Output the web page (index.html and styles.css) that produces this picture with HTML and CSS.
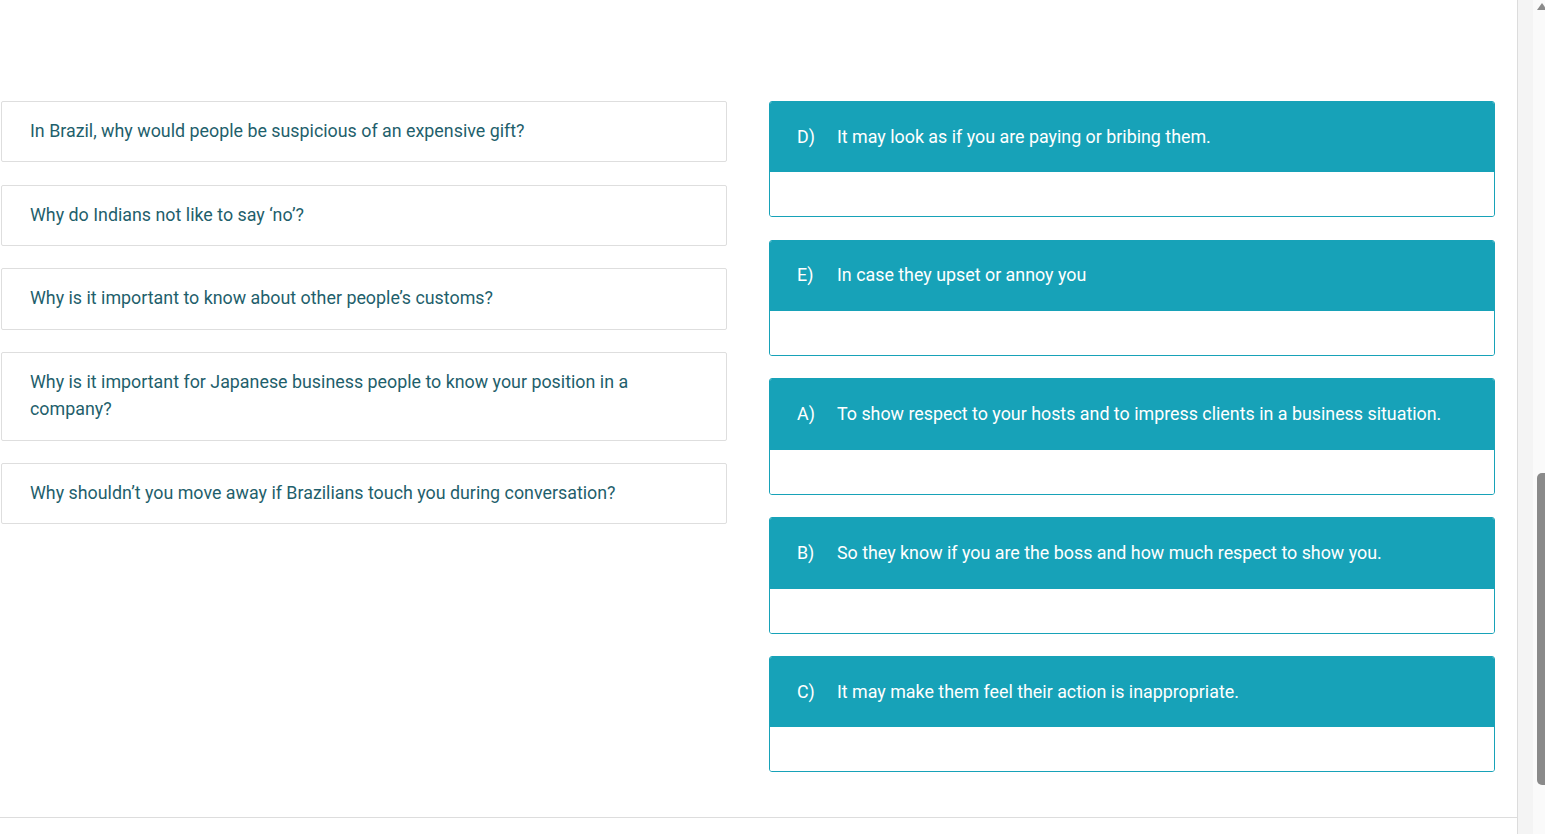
FILE: index.html
```html
<!DOCTYPE html>
<html lang="en">
<head>
<meta charset="utf-8">
<title>Matching</title>
<link rel="stylesheet" href="styles.css">
</head>
<body>
<div class="frame">
  <div class="page">
    <div class="content">
      <div class="questions">
        <div class="q-card">In Brazil, why would people be suspicious of an expensive gift?</div>
        <div class="q-card">Why do Indians not like to say ‘no’?</div>
        <div class="q-card">Why is it important to know about other people’s customs?</div>
        <div class="q-card">Why is it important for Japanese business people to know your position in a company?</div>
        <div class="q-card">Why shouldn’t you move away if Brazilians touch you during conversation?</div>
      </div>
      <div class="answers">
        <div class="a-card">
          <div class="a-head"><span class="a-letter">D)</span><span class="a-text">It may look as if you are paying or bribing them.</span></div>
          <div class="a-drop"></div>
        </div>
        <div class="a-card">
          <div class="a-head"><span class="a-letter">E)</span><span class="a-text">In case they upset or annoy you</span></div>
          <div class="a-drop"></div>
        </div>
        <div class="a-card">
          <div class="a-head"><span class="a-letter">A)</span><span class="a-text">To show respect to your hosts and to impress clients in a business situation.</span></div>
          <div class="a-drop"></div>
        </div>
        <div class="a-card">
          <div class="a-head"><span class="a-letter">B)</span><span class="a-text">So they know if you are the boss and how much respect to show you.</span></div>
          <div class="a-drop"></div>
        </div>
        <div class="a-card">
          <div class="a-head"><span class="a-letter">C)</span><span class="a-text">It may make them feel their action is inappropriate.</span></div>
          <div class="a-drop"></div>
        </div>
      </div>
    </div>
    <div class="footer-line"></div>
  </div>
  <div class="side">
    <div class="side-pad"></div>
    <div class="scrollbar">
      <div class="arrow-up"></div>
      <div class="thumb"></div>
    </div>
  </div>
</div>
</body>
</html>
```

FILE: styles.css
```css
html, body {
  margin: 0;
  padding: 0;
  height: 100%;
  background: #ffffff;
  overflow: hidden;
}

body {
  font-family: Roboto, "Liberation Sans", Arial, sans-serif;
}

.frame {
  display: flex;
  height: 834px;
  width: 1545px;
}

.page {
  width: 1517px;
  border-right: 1px solid #dcdcdc;
  display: flex;
  flex-direction: column;
}

.content {
  display: grid;
  grid-template-columns: 726px 726px;
  column-gap: 42px;
  align-items: start;
  padding: 101px 0 0 1px;
  height: 817px;
  box-sizing: border-box;
}

.questions {
  display: flex;
  flex-direction: column;
  gap: 22.33px;
}

.q-card {
  border: 1px solid #dedede;
  border-radius: 2px;
  padding: 15px 28px 17px 28px;
  font-size: 17.85px;
  line-height: 27.33px;
  color: #1f5f6c;
}

.answers {
  display: flex;
  flex-direction: column;
  gap: 22.33px;
}

.a-card {
  border: 1px solid #17a2b8;
  border-radius: 3px;
  overflow: hidden;
}

.a-head {
  background: #17a2b8;
  color: #ffffff;
  height: 70.42px;
  box-sizing: border-box;
  display: flex;
  align-items: center;
  padding: 0 0 2px 27px;
  font-size: 17.85px;
}

.a-letter {
  width: 40px;
}

.a-drop {
  height: 44px;
  background: #ffffff;
}

.footer-line {
  border-top: 1px solid #dddddd;
  height: 0;
}

.side {
  display: flex;
  width: 27px;
}

.side-pad {
  width: 15px;
  background: #f4f4f4;
}

.scrollbar {
  width: 12px;
  background: #fafafa;
  display: flex;
  flex-direction: column;
}

.arrow-up {
  margin: 3px 0 0 4px;
  width: 0;
  height: 0;
  border-left: 5px solid transparent;
  border-right: 5px solid transparent;
  border-bottom: 7px solid #8a8a8a;
}

.thumb {
  margin: 463px 0 0 4px;
  height: 312px;
  width: 12px;
  background: #8a8a8a;
  border-radius: 5px;
}
```
